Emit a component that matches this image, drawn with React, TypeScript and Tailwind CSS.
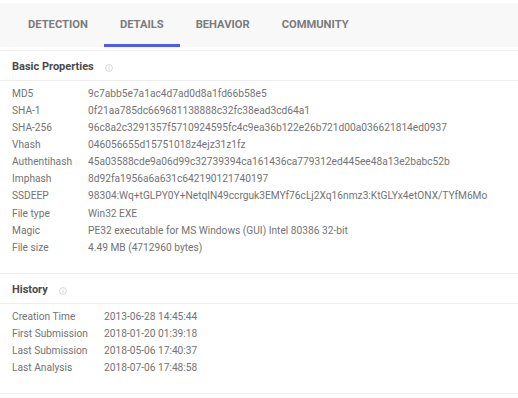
const TABS = ["DETECTION", "DETAILS", "BEHAVIOR", "COMMUNITY"];

const BASIC: [string, string][] = [
  ["MD5", "9c7abb5e7a1ac4d7ad0d8a1fd66b58e5"],
  ["SHA-1", "0f21aa785dc669681138888c32fc38ead3cd64a1"],
  ["SHA-256", "96c8a2c3291357f5710924595fc4c9ea36b122e26b721d00a036621814ed0937"],
  ["Vhash", "046056655d15751018z4ejz31z1fz"],
  ["Authentihash", "45a03588cde9a06d99c32739394ca161436ca779312ed445ee48a13e2babc52b"],
  ["Imphash", "8d92fa1956a6a631c642190121740197"],
  ["SSDEEP", "98304:Wq+tGLPY0Y+NetqIN49ccrguk3EMYf76cLj2Xq16nmz3:KtGLYx4etONX/TYfM6Mo"],
  ["File type", "Win32 EXE"],
  ["Magic", "PE32 executable for MS Windows (GUI) Intel 80386 32-bit"],
  ["File size", "4.49 MB (4712960 bytes)"],
];

const HISTORY: [string, string][] = [
  ["Creation Time", "2013-06-28 14:45:44"],
  ["First Submission", "2018-01-20 01:39:18"],
  ["Last Submission", "2018-05-06 17:40:37"],
  ["Last Analysis", "2018-07-06 17:48:58"],
];

function InfoIcon() {
  return (
    <svg width="8" height="8" viewBox="0 0 8 8" className="ml-[11px] mt-[2px]">
      <circle cx="4" cy="4" r="3.4" fill="none" stroke="#cccccc" strokeWidth="0.8" />
      <rect x="3.6" y="3.4" width="0.8" height="2.4" fill="#cccccc" />
      <rect x="3.6" y="2.2" width="0.8" height="0.7" fill="#cccccc" />
    </svg>
  );
}

function Section({
  title,
  rows,
  labelW,
}: {
  title: string;
  rows: [string, string][];
  labelW: string;
}) {
  return (
    <div className="border-b border-[#eeeeee]">
      <div className="flex h-[30px] items-center border-b border-[#eeeeee] px-3 pt-[3px]">
        <span className="text-[11px] font-bold text-[#4a4a4a]">{title}</span>
        <InfoIcon />
      </div>
      <div className="px-3 pb-[17px] pt-[4px]">
        {rows.map(([k, v]) => (
          <div key={k} className="flex h-[17.1px] items-center text-[10.2px] text-[#737373]">
            <span className={labelW + " shrink-0"}>{k}</span>
            <span className="whitespace-nowrap">{v}</span>
          </div>
        ))}
      </div>
    </div>
  );
}

export default function App() {
  return (
    <div
      className="h-[398px] w-[518px] overflow-hidden bg-white"
      style={{ fontFamily: "Roboto, 'Liberation Sans', sans-serif" }}
    >
      <div className="pt-[3px]">
        <div className="flex h-[44px] bg-[#f8f8f8] pl-[12px]">
          {TABS.map((t) => (
            <div
              key={t}
              className="relative flex items-center px-[16px] text-[11.2px] font-bold text-[#7c7c7c]"
            >
              {t}
              {t === "DETAILS" && (
                <span className="absolute bottom-0 left-0 right-0 h-[3px] bg-[#4a5ee8]" />
              )}
            </div>
          ))}
        </div>
        <div className="h-[4px] border-b border-[#f0f0f0]" />
      </div>
      <Section title="Basic Properties" rows={BASIC} labelW="w-[76px]" />
      <Section title="History" rows={HISTORY} labelW="w-[92px]" />
    </div>
  );
}
